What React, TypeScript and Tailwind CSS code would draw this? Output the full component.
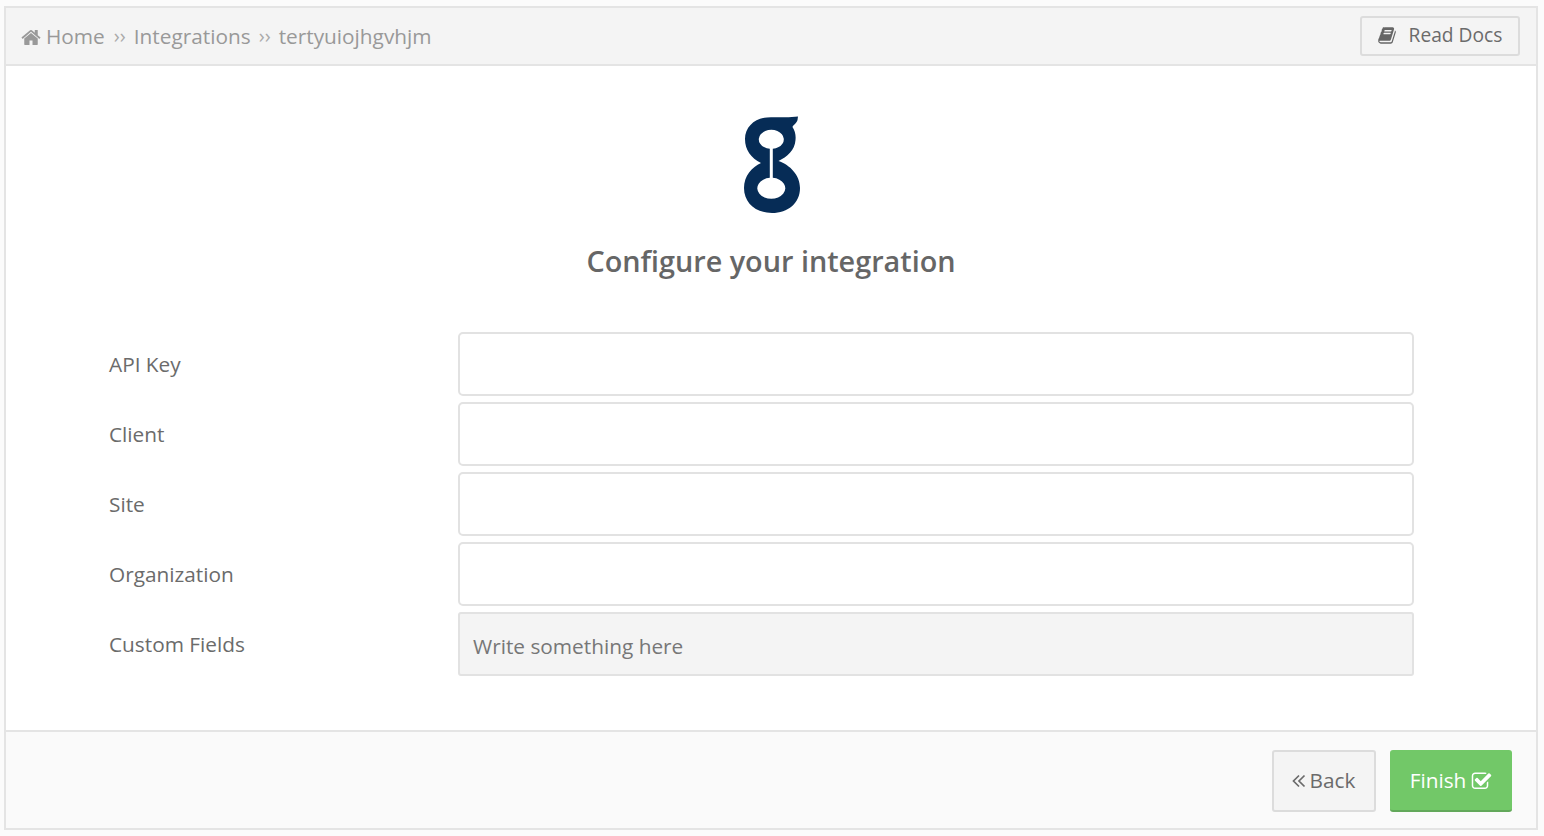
import React from "react";

const HomeIcon = () => (
  <svg viewBox="0 0 1664 1792" className="w-[20px] h-[21px] fill-[#999999]">
    <path d="M1408 992v480q0 26-19 45t-45 19H960v-384H704v384H320q-26 0-45-19t-19-45V992q0-1 .5-3t.5-3l575-474 575 474q1 2 1 6zm223-69l-62 74q-8 9-21 11h-3q-13 0-21-7L832 408 140 1001q-12 8-24 7-13-2-21-11l-62-74q-8-10-7-23.500t11-21.500l719-599q32-26 76-26t76 26l244 204V288q0-14 9-23t23-9h192q14 0 23 9t9 23v408l219 182q10 8 11 21.500t-7 23.500z" />
  </svg>
);

const BookIcon = () => (
  <svg viewBox="0 0 1664 1792" className="w-[18px] h-[19px] fill-[#666666]">
    <path d="M1639 478q40 57 18 129l-275 906q-19 64-76.500 107.500T1183 1664H260q-77 0-148.500-53.500T12 1479q-24-67-2-127 0-4 3-27t4-37q1-8-3-21.500t-3-19.500q2-11 8-21t16.500-23.500T52 1179q23-38 45-91.500t30-91.500q3-10 .5-30t-.5-28q3-11 17-28t17-23q21-36 42-92t25-90q1-9-2.500-32t.5-28q4-13 22-30.500t22-22.500q19-26 42.500-84.500T338 398q1-8-3-25.500t-2-26.500q2-8 9-18t18-23 17-21q8-12 16.500-30.500t15-35 16-36 19.500-32 26.500-23.500 36-11.500T555 127l-1 3q38-9 51-9h761q74 0 114 56t18 130l-274 906q-36 119-71.500 153.500T1024 1401H155q-27 0-38 15-11 16-1 43 24 70 144 70h923q29 0 56-15.500t35-41.500l300-987q7-22 5-57 38 15 60 50zm-1064 2q-4 13 2 22.500t20 9.500h608q13 0 25.500-9.500T1247 480l21-64q4-13-2-22.500t-20-9.500H638q-13 0-25.500 9.500T596 416zm-83 256q-4 13 2 22.500t20 9.500h608q13 0 25.500-9.500T1164 736l21-64q4-13-2-22.500t-20-9.500H555q-13 0-25.500 9.500T513 672z" />
  </svg>
);

const CheckSquareIcon = () => (
  <svg viewBox="0 0 1792 1792" className="w-[21px] h-[21px] fill-white">
    <path d="M1472 930v318q0 119-84.500 203.500T1184 1536H352q-119 0-203.500-84.500T64 1248V416q0-119 84.500-203.500T352 128h832q63 0 117 25 15 7 18 23 3 17-9 29l-49 49q-10 10-23 10-3 0-9-2-23-6-45-6H352q-66 0-113 47t-47 113v832q0 66 47 113t113 47h832q66 0 113-47t47-113V994q0-13 9-22l64-64q10-10 23-10 6 0 12 3 20 8 20 29zm231-489l-814 814q-24 24-57 24t-57-24L345 825q-24-24-24-57t24-57l110-110q24-24 57-24t57 24l263 263 647-647q24-24 57-24t57 24l110 110q24 24 24 57t-24 57z" />
  </svg>
);

const AngleDoubleLeft = () => (
  <svg viewBox="0 0 14 14" className="w-[14px] h-[14px] fill-none stroke-[#6b6b6b] stroke-[1.7] mr-[1px] -ml-[1px]">
    <path d="M7 1.500 1.500 7 7 12.500" />
    <path d="M12.500 1.500 7 7 12.500 12.500" />
  </svg>
);

const Logo = () => (
  <svg viewBox="24 11 56 98" className="w-[56px] h-[98px] ml-[2px]">
    <path
      fillRule="evenodd"
      fill="#062c56"
      d="M47 12.500 C55 11.500 68 13 78 11.500 L77.500 15 C77 18 73 20 72.500 22 C75 26 76 30 75.500 35 C75 45 67 52 58.500 56 C70 60 80 70 80 83 C80 98 68 108 52 108 C36 108 24 98 24 83 C24 71 32 62 41 58 C31 53 25 45 25 34 C25 22 35 13 47 12.500 Z M49.800 43.800 A12.500 9.500 0 1 1 52.800 43.800 L52.800 72.800 A14 10.500 0 1 1 49.800 72.800 Z"
    />
  </svg>
);

const Sep = ({ first }: { first?: boolean }) =>
  first ? (
    <span className="text-[#aaaaaa] text-[20px] ml-[9px] mr-[8px] relative -top-px">››</span>
  ) : (
    <span className="text-[#aaaaaa] text-[20px] mx-[8px] relative -top-px">››</span>
  );

const fields = ["API Key", "Client", "Site", "Organization"];

export default function App() {
  return (
    <div className="w-[1544px] h-[836px] bg-[#fbfbfb] pt-[6px] pl-[4px] pr-[6px] overflow-hidden font-['Open_Sans',sans-serif]">
      <div className="h-[824px] border-2 border-[#e4e4e4] flex flex-col">
        <div className="h-[58px] shrink-0 bg-[#f4f4f4] border-b-2 border-[#e4e4e4] flex items-center justify-between pl-[15px] pr-[16px]">
          <div className="flex items-center text-[20.8px] text-[#999999] pt-[2px]">
            <HomeIcon />
            <span className="ml-[5px]">Home</span>
            <Sep first />
            <span>Integrations</span>
            <Sep />
            <span>tertyuiojhgvhjm</span>
          </div>
          <button className="w-[160px] h-[40px] border-2 border-[#dcdcdc] rounded-[3px] bg-[#f4f4f4] flex items-center justify-center gap-[13px] text-[19.2px] text-[#6b6b6b] pb-[2px]">
            <BookIcon />
            <span>Read Docs</span>
          </button>
        </div>
        <div className="flex-1 bg-white flex flex-col items-center">
          <div className="mt-[50px]">
            <Logo />
          </div>
          <h1 className="mt-[25px] text-[28.8px] leading-[44px] font-semibold text-[#666666]">Configure your integration</h1>
          <div className="mt-[49px] w-full pl-[103px] pr-[122px] flex flex-col gap-[6px]">
            {fields.map((f) => (
              <div key={f} className="flex items-center h-[64px]">
                <label className="w-[349px] text-[20.8px] text-[#6b6b6b] relative top-px">{f}</label>
                <input className="flex-1 h-[64px] border-2 border-[#e2e2e2] rounded-[5px] bg-white" />
              </div>
            ))}
            <div className="flex items-center h-[64px]">
              <label className="w-[349px] text-[20.8px] text-[#6b6b6b] relative top-px">Custom Fields</label>
              <div className="flex-1 h-[64px] border-2 border-[#e2e2e2] rounded-[3px] bg-[#f4f4f4] flex items-center pl-[13px] pt-[6px] text-[20.8px] text-[#777777]">
                Write something here
              </div>
            </div>
          </div>
        </div>
        <div className="h-[98px] shrink-0 bg-[#fafafa] border-t-2 border-[#e4e4e4] flex items-start justify-end gap-[14px] pt-[18px] pr-[24px]">
          <button className="w-[104px] h-[62px] border-2 border-[#dcdcdc] rounded-[3px] bg-[#f4f4f4] text-[20.8px] text-[#6b6b6b] flex items-center justify-center gap-[3px]">
            <AngleDoubleLeft />
            <span>Back</span>
          </button>
          <button className="w-[122px] h-[62px] border-b-2 border-b-[#62a85a] rounded-[3px] bg-[#72c868] text-[20.8px] text-white flex items-center justify-center gap-[5px] pt-[2px]">
            <span>Finish</span>
            <CheckSquareIcon />
          </button>
        </div>
      </div>
    </div>
  );
}
